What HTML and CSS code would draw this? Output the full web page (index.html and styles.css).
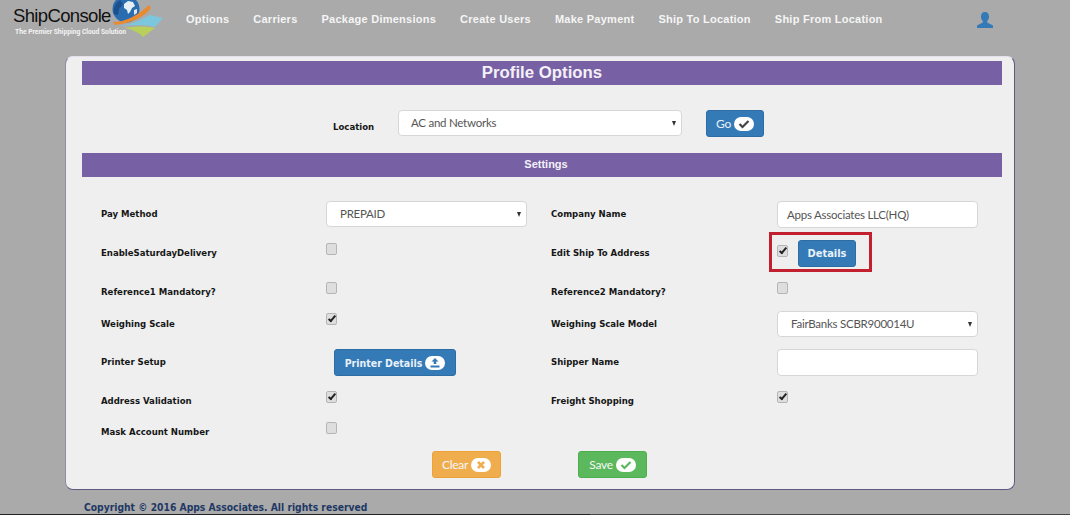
FILE: index.html
```html
<!DOCTYPE html>
<html>
<head lang="en">
    <meta charset="UTF-8">
    <title>Profile Options</title>
    <link rel="stylesheet" href="styles.css">
</head>
<body>
<div class="top-bar">
    <div class="logo">
        <div class="logo-text">
            <span class="logo-name">ShipConsole</span>
            <span class="logo-tag">The Premier Shipping Cloud Solution</span>
        </div>
        <svg class="logo-art" width="54" height="40" viewBox="0 0 54 40">
            <circle cx="14" cy="9" r="13.500" fill="#2a6cb0"/>
            <path d="M2 14A13 13 0 0 1 8 0l3 4-4 5-1 6z" fill="#1c4f8c"/>
            <path d="M12 4l4-3 5 1 2 4-3 2-2 4-2 2-1-4-3-2z" fill="#e6eef3"/>
            <path d="M22 10l3-1 0 4-3 2z" fill="#dfe8ee"/>
            <path d="M1 22C12 23 28 14 37 5l2 3C32 17 20 23 3 25z" fill="#e98a2e"/>
            <path d="M4 26C20 25 30 19 38 15l13 3-8 9C30 24 15 26 4 26z" fill="#7cc6de"/>
            <path d="M12 28C24 26 34 26 43 28L31 37C28 33 20 29 12 28z" fill="#b9cf5c"/>
        </svg>
    </div>
    <ul class="nav">
        <li>Options</li>
        <li>Carriers</li>
        <li>Package Dimensions</li>
        <li>Create Users</li>
        <li>Make Payment</li>
        <li>Ship To Location</li>
        <li>Ship From Location</li>
    </ul>
    <svg class="user-icon" width="18" height="16" viewBox="0 0 18 16">
        <path d="M9 0c2.700 0 4 2 4 4.500 0 2-.8 3.500-1.800 4.500v1.500L17 13.500V16H1v-2.500l5.800-3V9C5.800 8 5 6.500 5 4.500 5 2 6.300 0 9 0z" fill="#337ab7"/>
    </svg>
</div>

<div class="panel">
    <div class="title-bar">Profile Options</div>
    <div class="location-row">
        <span class="label location-label">Location</span>
        <div class="select location-select">AC and Networks</div>
        <div class="btn btn-blue btn-go">Go <span class="pill"><svg width="12" height="10" viewBox="0 0 12 10"><path d="M1.500 5l3 3 6-6" fill="none" stroke="#444" stroke-width="2.200"/></svg></span></div>
    </div>
    <div class="settings-bar">Settings</div>

    <div class="form">
        <div class="form-row row-a">
            <span class="label col-label">Pay Method</span>
            <div class="col-field"><div class="select pay-select">PREPAID</div></div>
            <span class="label col-label">Company Name</span>
            <div class="col-field"><div class="text-input">Apps Associates LLC(HQ)</div></div>
        </div>
        <div class="form-row row-b">
            <span class="label col-label">EnableSaturdayDelivery</span>
            <div class="col-field"><span class="check"></span></div>
            <span class="label col-label">Edit Ship To Address</span>
            <div class="col-field">
                <div class="marked">
                    <span class="check on"></span>
                    <div class="btn btn-blue btn-details">Details</div>
                </div>
            </div>
        </div>
        <div class="form-row row-c">
            <span class="label col-label">Reference1 Mandatory?</span>
            <div class="col-field"><span class="check"></span></div>
            <span class="label col-label">Reference2 Mandatory?</span>
            <div class="col-field"><span class="check"></span></div>
        </div>
        <div class="form-row row-d">
            <span class="label col-label">Weighing Scale</span>
            <div class="col-field"><span class="check on"></span></div>
            <span class="label col-label">Weighing Scale Model</span>
            <div class="col-field"><div class="select scale-select">FairBanks SCBR900014U</div></div>
        </div>
        <div class="form-row row-e">
            <span class="label col-label">Printer Setup</span>
            <div class="col-field"><div class="btn btn-blue btn-printer">Printer Details <span class="pill"><svg width="12" height="10" viewBox="0 0 12 10"><path d="M6 0l3.500 3.500H7.300V6H4.700V3.500H2.500zM1.500 7.500h9V9.500h-9z" fill="#337ab7"/></svg></span></div></div>
            <span class="label col-label">Shipper Name</span>
            <div class="col-field"><div class="text-input"></div></div>
        </div>
        <div class="form-row row-f">
            <span class="label col-label">Address Validation</span>
            <div class="col-field"><span class="check on"></span></div>
            <span class="label col-label">Freight Shopping</span>
            <div class="col-field"><span class="check on"></span></div>
        </div>
        <div class="form-row row-g">
            <span class="label col-label">Mask Account Number</span>
            <div class="col-field"><span class="check"></span></div>
        </div>
    </div>

    <div class="actions">
        <div class="btn btn-orange">Clear <span class="pill"><svg width="10" height="10" viewBox="0 0 10 10"><path d="M2 2l6 6M8 2l-6 6" stroke="#f0ad4e" stroke-width="2.600" fill="none"/></svg></span></div>
        <div class="btn btn-green">Save <span class="pill"><svg width="12" height="10" viewBox="0 0 12 10"><path d="M1.500 5l3 3 6-6" fill="none" stroke="#5cb85c" stroke-width="2.200"/></svg></span></div>
    </div>
</div>

<div class="copyright">Copyright © 2016 Apps Associates. All rights reserved</div>
<div class="window-edge"></div>
</body>
</html>
```

FILE: styles.css
```css
*{
    margin: 0;
    padding: 0;
    box-sizing: border-box;
}
ul{
    list-style: none;
}
html,body{
    height: 515px;
    overflow: hidden;
}
body{
    background: #aaaaaa;
    font-family: "Lato", sans-serif;
}

/* header */
.top-bar{
    height: 56px;
    display: flex;
    align-items: flex-start;
}
.logo{
    width: 186px;
    display: flex;
    padding-left: 13px;
}
.logo-text{
    width: 0;
    white-space: nowrap;
    padding-top: 5px;
}
.logo-name{
    display: block;
    font-family: "Liberation Sans", sans-serif;
    font-size: 18.500px;
    line-height: 22px;
    letter-spacing: -0.65px;
    color: #111;
}
.logo-tag{
    display: block;
    font-family: "Roboto", sans-serif;
    font-weight: bold;
    font-size: 6.700px;
    line-height: 9px;
    margin: 1px 0 0 2px;
    color: #f4f4f4;
}
.logo-art{
    margin-left: 99px;
}
.nav{
    display: flex;
    gap: 24px;
    padding-top: 13px;
}
.nav li{
    font-family: "Liberation Sans", sans-serif;
    font-weight: bold;
    font-size: 11px;
    line-height: 13px;
    letter-spacing: 0.25px;
    color: #f5f5f5;
    white-space: nowrap;
}
.user-icon{
    margin: 12px 0 0 93px;
}

/* panel */
.panel{
    width: 950px;
    height: 434px;
    margin-left: 65px;
    background: #efefef;
    border: 1px solid #5d5a80;
    border-top-color: #e6e0ee;
    border-left-color: #8f8ca6;
    border-radius: 8px;
    padding: 4px 12px 0 16px;
}
.title-bar{
    height: 24px;
    background: #7860a4;
    color: #f3f1f7;
    text-align: center;
    font-family: "Liberation Sans", sans-serif;
    font-weight: bold;
    font-size: 16.800px;
    line-height: 24px;
}
.location-row{
    height: 68px;
    display: flex;
    align-items: flex-start;
    padding: 25px 0 0 251px;
}
.label{
    font-family: "DejaVu Sans Condensed", "DejaVu Sans", sans-serif;
    font-stretch: condensed;
    font-weight: bold;
    font-size: 9.500px;
    color: #161616;
}
.location-label{
    width: 65px;
    padding-top: 11px;
}
.select,.text-input{
    background: #fff;
    border: 1px solid #d6d6d6;
    border-radius: 4px;
    color: #555;
    font-size: 11.500px;
    letter-spacing: -0.25px;
    position: relative;
}
.select:after{
    content: "";
    position: absolute;
    right: 5px;
    top: 50%;
    margin-top: -2px;
    border-top: 5px solid #333;
    border-left: 2.500px solid transparent;
    border-right: 2.500px solid transparent;
}
.location-select{
    width: 284px;
    height: 26px;
    line-height: 24px;
    padding-left: 12px;
}
.settings-bar{
    height: 24px;
    background: #7860a4;
    color: #f3f1f7;
    text-align: center;
    font-family: "Liberation Sans", sans-serif;
    font-weight: bold;
    font-size: 11px;
    line-height: 22px;
    padding-left: 8px;
}

.btn{
    display: inline-flex;
    align-items: center;
    justify-content: center;
    gap: 3px;
    border-radius: 3px;
    color: #e9f1f8;
    font-size: 12px;
    letter-spacing: -0.3px;
}
.btn-blue{
    background: #337ab7;
    border: 1px solid #2e6da4;
}
.btn-go{
    width: 58px;
    height: 27px;
    margin-left: 24px;
}
.pill{
    display: inline-flex;
    align-items: center;
    justify-content: center;
    width: 20px;
    height: 14px;
    border-radius: 7px;
    background: #fff;
}

/* settings form */
.form{
    padding-top: 24px;
}
.form-row{
    display: grid;
    grid-template-columns: 225px 225px 226px 1fr;
    padding-left: 19px;
}
.col-label{
    padding-top: 7px;
}
.col-field{
    display: flex;
    align-items: flex-start;
}
.row-a{ height: 39px; }
.row-b{ height: 39px; }
.row-c{ height: 32px; }
.row-d{ height: 38px; }
.row-e{ height: 39px; }
.row-f{ height: 31px; }
.row-g{ height: 31px; }
.pay-select,.scale-select{
    width: 201px;
    height: 26px;
    line-height: 24px;
    padding-left: 13px;
}
.text-input{
    width: 201px;
    height: 27px;
    line-height: 25px;
    padding-left: 9px;
}
.check{
    display: block;
    width: 11px;
    height: 12px;
    margin-top: 3px;
    border: 1px solid #b5b5b5;
    border-radius: 2px;
    background: #dedede;
    position: relative;
}
.row-d .check{
    margin-top: 2px;
}
.check.on:after{
    content: "";
    box-sizing: content-box;
    position: absolute;
    left: 3px;
    top: 0;
    width: 2px;
    height: 6px;
    border: solid #222;
    border-width: 0 2px 2px 0;
    transform: rotate(40deg);
}
.marked{
    display: flex;
    align-items: flex-start;
    gap: 10px;
    position: relative;
}
.marked .check{
    margin-top: 5px;
}
.marked:before{
    content: "";
    box-sizing: border-box;
    position: absolute;
    left: -8px;
    top: -8px;
    width: 103px;
    height: 40px;
    border: 3px solid #c2202e;
}
.btn-details{
    width: 58px;
    height: 27px;
    font-family: "DejaVu Sans Condensed", "DejaVu Sans", sans-serif;
    font-stretch: condensed;
    font-weight: bold;
    font-size: 11px;
    letter-spacing: 0;
}
.btn-printer{
    width: 122px;
    height: 27px;
    margin-left: 8px;
    font-family: "DejaVu Sans Condensed", "DejaVu Sans", sans-serif;
    font-stretch: condensed;
    font-weight: bold;
    font-size: 10.500px;
    letter-spacing: 0;
}
.actions{
    display: flex;
    gap: 77px;
    padding-left: 350px;
    margin-top: 1px;
}
.btn-orange,.btn-green{
    width: 69px;
    height: 27px;
    color: #f7f7f7;
}
.btn-orange{
    background: #f0ad4e;
    border: 1px solid #eea236;
}
.btn-green{
    background: #5cb85c;
    border: 1px solid #4cae4c;
}

.copyright{
    height: 24px;
    padding: 11px 0 0 84px;
    font-family: "DejaVu Sans Condensed", "DejaVu Sans", sans-serif;
    font-stretch: condensed;
    font-weight: bold;
    font-size: 10.250px;
    line-height: 13px;
    color: #1f3864;
}
.window-edge{
    height: 1px;
    background: linear-gradient(to right, #222 590px, #444 590px);
}
```
